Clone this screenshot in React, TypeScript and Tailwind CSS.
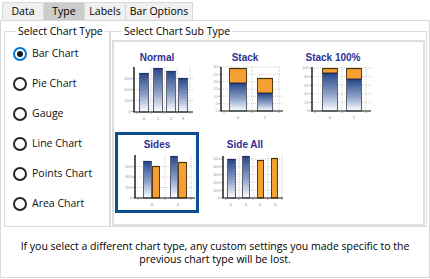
import React from "react";

type Bar = { x1: number; x2: number; top: number; base: number; fill: "blue" | "orange" };

type ChartSpec = {
  title: string;
  vb: [number, number];
  axisX: number;
  top: number;
  base: number;
  right: number;
  yTicks: [number, string][];
  xLabels: [number, string][];
  vGrid: number[];
  bars: Bar[];
};

const CHARTS: ChartSpec[] = [
  {
    title: "Normal",
    vb: [118, 65],
    axisX: 134,
    top: 67,
    base: 112,
    right: 193,
    yTicks: [
      [111.5, "0"],
      [100.5, "100"],
      [89.5, "200"],
      [78.5, "300"],
    ],
    xLabels: [
      [144, "0"],
      [158, "1"],
      [171, "2"],
      [183, "3"],
    ],
    vGrid: [151, 164.5, 177, 190],
    bars: [
      { x1: 139, x2: 149, top: 73, base: 112, fill: "blue" },
      { x1: 153, x2: 163, top: 68, base: 112, fill: "blue" },
      { x1: 166, x2: 176, top: 71, base: 112, fill: "blue" },
      { x1: 178, x2: 188, top: 78, base: 112, fill: "blue" },
    ],
  },
  {
    title: "Stack",
    vb: [206, 65],
    axisX: 221,
    top: 67,
    base: 111,
    right: 283,
    yTicks: [
      [111, "0"],
      [103.7, "5"],
      [96.3, "10"],
      [89, "15"],
      [81.7, "20"],
      [74.3, "25"],
      [67, "30"],
    ],
    xLabels: [
      [238, "0"],
      [265, "1"],
    ],
    vGrid: [252, 279],
    bars: [
      { x1: 229, x2: 247, top: 83, base: 111, fill: "blue" },
      { x1: 229, x2: 247, top: 68, base: 83, fill: "orange" },
      { x1: 257, x2: 273, top: 93, base: 111, fill: "blue" },
      { x1: 257, x2: 273, top: 78, base: 93, fill: "orange" },
    ],
  },
  {
    title: "Stack 100%",
    vb: [294, 65],
    axisX: 312,
    top: 67,
    base: 111,
    right: 371,
    yTicks: [
      [111, "0"],
      [102.4, "20"],
      [93.8, "40"],
      [85.2, "60"],
      [76.6, "80"],
      [68, "100"],
    ],
    xLabels: [
      [330, "0"],
      [354, "1"],
    ],
    vGrid: [342, 366],
    bars: [
      { x1: 322, x2: 338, top: 73, base: 111, fill: "blue" },
      { x1: 322, x2: 338, top: 68, base: 73, fill: "orange" },
      { x1: 346, x2: 362, top: 79, base: 111, fill: "blue" },
      { x1: 346, x2: 362, top: 68, base: 79, fill: "orange" },
    ],
  },
  {
    title: "Sides",
    vb: [118, 152],
    axisX: 135,
    top: 155,
    base: 198,
    right: 195,
    yTicks: [
      [198, "0"],
      [187.5, "200"],
      [177, "400"],
      [166.5, "600"],
    ],
    xLabels: [
      [152, "0"],
      [178, "1"],
    ],
    vGrid: [165, 191],
    bars: [
      { x1: 143, x2: 152, top: 161, base: 198, fill: "blue" },
      { x1: 152, x2: 160, top: 166, base: 198, fill: "orange" },
      { x1: 170, x2: 178, top: 156, base: 198, fill: "blue" },
      { x1: 178, x2: 187, top: 162, base: 198, fill: "orange" },
    ],
  },
  {
    title: "Side All",
    vb: [206, 152],
    axisX: 223,
    top: 156,
    base: 198,
    right: 283,
    yTicks: [
      [198, "0"],
      [190.2, "100"],
      [182.4, "200"],
      [174.6, "300"],
      [166.8, "400"],
      [159, "500"],
    ],
    xLabels: [
      [231, "0"],
      [246, "1"],
      [260, "2"],
      [275, "3"],
    ],
    vGrid: [239, 253, 268, 282],
    bars: [
      { x1: 227, x2: 236, top: 159, base: 198, fill: "blue" },
      { x1: 242, x2: 250, top: 156, base: 198, fill: "blue" },
      { x1: 257, x2: 264, top: 160, base: 198, fill: "orange" },
      { x1: 271, x2: 278, top: 158, base: 198, fill: "orange" },
    ],
  },
];

function Chart({ c }: { c: ChartSpec }) {
  const [vx, vy] = c.vb;
  return (
    <svg width={78} height={58} viewBox={`${vx} ${vy} 78 58`} className="block">
      <defs>
        <linearGradient id="blueBar" x1="0" y1="0" x2="0" y2="1">
          <stop offset="0" stopColor="#28478a" />
          <stop offset="0.55" stopColor="#8ea2c8" />
          <stop offset="1" stopColor="#ffffff" />
        </linearGradient>
      </defs>
      {/* grid */}
      {c.yTicks.slice(1).map(([y]) => (
        <line key={"h" + y} x1={c.axisX} x2={c.right} y1={y} y2={y} stroke="#b4b4b4" strokeWidth={0.6} strokeDasharray="1 1" />
      ))}
      {c.vGrid.map((x) => (
        <line key={"v" + x} x1={x} x2={x} y1={c.top} y2={c.base} stroke="#b4b4b4" strokeWidth={0.6} strokeDasharray="1 1" />
      ))}
      {/* bars */}
      {c.bars.map((b, i) => (
        <rect
          key={i}
          x={b.x1 + 0.5}
          y={b.top + 0.5}
          width={b.x2 - b.x1 - 1}
          height={b.base - b.top - 0.5}
          fill={b.fill === "blue" ? "url(#blueBar)" : "#f5a035"}
          stroke={b.fill === "blue" ? "#5d6275" : "#5b3c12"}
          strokeWidth={1}
        />
      ))}
      {c.bars.map((b, i) => (
        <line key={"t" + i} x1={b.x1 + 0.5} x2={b.x2 - 0.5} y1={b.top + 0.5} y2={b.top + 0.5} stroke={b.fill === "blue" ? "#1d2f66" : "#4a2e08"} strokeWidth={1.2} />
      ))}
      {/* axes */}
      <line x1={c.axisX} x2={c.axisX} y1={c.top} y2={c.base} stroke="#111" strokeWidth={1.4} />
      <line x1={c.axisX - 0.7} x2={c.right} y1={c.base} y2={c.base} stroke="#111" strokeWidth={1.2} />
      {c.yTicks.map(([y, t]) => (
        <g key={"y" + t}>
          <line x1={c.axisX - 2.5} x2={c.axisX} y1={y} y2={y} stroke="#555" strokeWidth={0.6} />
          <text x={c.axisX - 3.5} y={y + 1.3} fontSize={3.8} textAnchor="end" fill="#9a9a9a" fontFamily="Liberation Sans, sans-serif">
            {t}
          </text>
        </g>
      ))}
      {c.xLabels.map(([x, t]) => (
        <text key={"x" + t} x={x} y={c.base + 8} fontSize={4.4} textAnchor="middle" fill="#8a8a8a" fontFamily="Liberation Sans, sans-serif">
          {t}
        </text>
      ))}
      {[c.axisX + 3, ...c.vGrid].map((x) => (
        <line key={"xt" + x} x1={x} x2={x} y1={c.base} y2={c.base + 2} stroke="#666" strokeWidth={0.6} />
      ))}
    </svg>
  );
}

function ChartCell({ c, selected }: { c: ChartSpec; selected?: boolean }) {
  return (
    <div
      className={`w-[84px] h-[81px] border-[3px] flex flex-col items-center ${
        selected ? "border-[#0d4f8e]" : "border-transparent"
      }`}
    >
      <div className="pt-[3px] h-[17px] leading-[14px] text-[10px] font-bold text-[#2e3192] font-['Liberation_Sans',Arial,sans-serif]">
        {c.title}
      </div>
      <Chart c={c} />
    </div>
  );
}

function Radio({ label, checked }: { label: string; checked?: boolean }) {
  return (
    <div className="flex items-center h-[30px]">
      <span
        className={`w-[14px] h-[14px] rounded-full border-2 bg-white flex items-center justify-center ${
          checked ? "border-[#0078d7]" : "border-[#262626]"
        }`}
      >
        {checked && <span className="w-[6px] h-[6px] rounded-full bg-[#1a1a1a]" />}
      </span>
      <span className="ml-[5px] text-[#111]">{label}</span>
    </div>
  );
}

const TABS = [
  { label: "Data", w: "w-[42px]" },
  { label: "Type", w: "w-[42px]", active: true },
  { label: "Labels", w: "w-[42px]" },
  { label: "Bar Options", w: "w-[68px]" },
];

export default function App() {
  return (
    <div className="w-[430px] h-[279px] bg-white text-[10.5px] text-black font-['Open_Sans','Noto_Sans',sans-serif] overflow-hidden">
      {/* tabs */}
      <div className="flex pt-[2px] pl-[2px] h-[20px]">
        {TABS.map((t) => (
          <div
            key={t.label}
            className={`${t.w} h-[18px] flex items-center justify-center border-t border-l border-r border-[#d9d9d9] -mr-px ${
              t.active ? "bg-[#cccccc]" : "bg-[#f0f0f0]"
            }`}
          >
            {t.label}
          </div>
        ))}
      </div>

      {/* panel */}
      <div className="w-[430px] h-[258px] border border-[#d9d9d9] bg-white">
        <div className="flex mt-[3px] ml-[3px]">
          <fieldset className="w-[106px] h-[203px] border border-[#dcdcdc]">
            <legend className="ml-[11px] px-[2px] leading-[15px]">Select Chart Type</legend>
            <div className="pl-[8px]">
              <Radio label="Bar Chart" checked />
              <Radio label="Pie Chart" />
              <Radio label="Gauge" />
              <Radio label="Line Chart" />
              <Radio label="Points Chart" />
              <Radio label="Area Chart" />
            </div>
          </fieldset>
          <fieldset className="w-[317px] h-[203px] border border-[#dcdcdc] px-px">
            <legend className="ml-[10px] px-[2px] leading-[15px]">Select Chart Sub Type</legend>
            <div className="mt-px h-[186px] border-2 border-[#dedede]">
              <div className="grid grid-cols-[84px_84px_84px] gap-x-[4px] gap-y-[6px] pl-px pt-[3px]">
                <ChartCell c={CHARTS[0]} />
                <ChartCell c={CHARTS[1]} />
                <ChartCell c={CHARTS[2]} />
                <ChartCell c={CHARTS[3]} selected />
                <ChartCell c={CHARTS[4]} />
              </div>
            </div>
          </fieldset>
        </div>
        <p className="mt-[13px] text-center leading-[13px]">
          If you select a different chart type, any custom settings you made specific to the
          <br />
          previous chart type will be lost.
        </p>
      </div>
    </div>
  );
}
